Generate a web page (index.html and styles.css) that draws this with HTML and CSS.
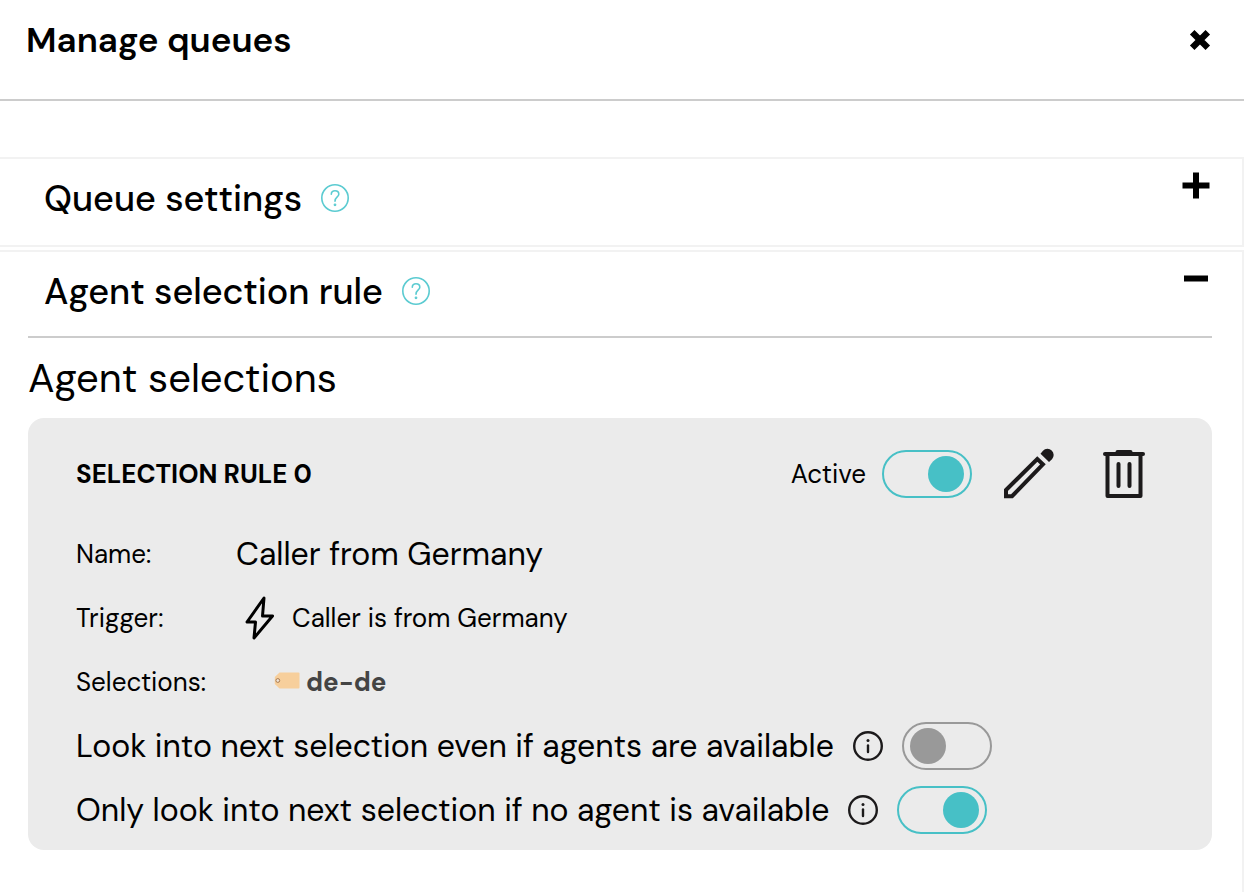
FILE: index.html
```html
<!DOCTYPE html>
<html lang="en">
<head>
<meta charset="UTF-8">
<meta name="viewport" content="width=device-width, initial-scale=1">
<title>Manage queues</title>
<link rel="stylesheet" href="styles.css">
</head>
<body>

    <header class="header">
        <h1>Manage queues</h1>
        <button type="button" class="icon-btn close" aria-label="Close">
            <svg width="24" height="24" viewBox="0 0 24 24"><path d="M4.2 4.2L19.8 19.8M19.8 4.2L4.2 19.8" stroke="#000" stroke-width="6.4"/></svg>
        </button>
    </header>

    <main class="panels">

        <section class="panel">
            <div class="panel-title">
                <h2>Queue settings</h2>
                <button type="button" class="icon-btn help" aria-label="Help">
                    <svg width="28" height="28" viewBox="0 0 28 28" fill="none" stroke="#5bcbd1" stroke-width="1.6" stroke-linecap="round"><circle cx="14" cy="14" r="13.2"/><path d="M10.3 10.2C10.3 7.9 11.8 6.8 14 6.8S17.8 8 17.8 10.2C17.8 13 14 12.8 14 17.2"/><circle cx="14" cy="20.8" r=".6" fill="#5bcbd1"/></svg>
                </button>
                <button type="button" class="icon-btn fold" aria-label="Expand">
                    <svg width="28" height="28" viewBox="0 0 28 28"><path d="M.5 14.5H27.5M14 1.5V27.5" stroke="#000" stroke-width="6"/></svg>
                </button>
            </div>
        </section>

        <section class="panel open">
            <div class="panel-title">
                <h2>Agent selection rule</h2>
                <button type="button" class="icon-btn help" aria-label="Help">
                    <svg width="28" height="28" viewBox="0 0 28 28" fill="none" stroke="#5bcbd1" stroke-width="1.6" stroke-linecap="round"><circle cx="14" cy="14" r="13.2"/><path d="M10.3 10.2C10.3 7.9 11.8 6.8 14 6.8S17.8 8 17.8 10.2C17.8 13 14 12.8 14 17.2"/><circle cx="14" cy="20.8" r=".6" fill="#5bcbd1"/></svg>
                </button>
                <button type="button" class="icon-btn fold" aria-label="Collapse">
                    <svg width="28" height="28" viewBox="0 0 28 28"><path d="M2 14.5H26" stroke="#000" stroke-width="6"/></svg>
                </button>
            </div>

            <div class="panel-body">
                <h3>Agent selections</h3>

                <div class="card">
                    <div class="card-head">
                        <h4>SELECTION RULE 0</h4>
                        <label for="active">Active</label>
                        <input type="checkbox" class="toggle" id="active" checked>
                        <button type="button" class="icon-btn edit" aria-label="Edit">
                            <svg width="52" height="52" viewBox="0 0 52 52"><path d="M4 42L35.3 11.1L40.9 16.3L10 48.2H4Z" fill="none" stroke="#1c1a1b" stroke-width="4"/><path d="M38.5 5.8L41 2.8A6 6 0 0 1 50 11.2L47 14Z" fill="#1c1a1b"/></svg>
                        </button>
                        <button type="button" class="icon-btn trash" aria-label="Delete">
                            <svg width="42" height="48" viewBox="0 0 42 48" fill="none" stroke="#1c1a1b" stroke-width="4" stroke-linecap="round" stroke-linejoin="round"><path d="M2 4H40"/><path d="M14.5 2H27.5"/><path d="M4.5 5V46H37.5V5"/><path d="M15.5 14V36M26.5 14V36"/></svg>
                        </button>
                    </div>

                    <dl class="details">
                        <dt>Name:</dt>
                        <dd class="name">Caller from Germany</dd>
                        <dt>Trigger:</dt>
                        <dd class="trigger">
                            <svg width="30" height="44" viewBox="0 0 30 44" fill="none" stroke="#000" stroke-width="3" stroke-linejoin="round"><path d="M19 2L2 26H10.5L9 42L27.5 20H17.5Z"/></svg>
                            Caller is from Germany
                        </dd>
                        <dt>Selections:</dt>
                        <dd class="tag">
                            <svg width="26" height="20" viewBox="0 0 26 20"><path d="M5.5 .5H24.5Q25.5 .5 25.5 1.5V15.5Q25.5 16.5 24.5 16.5H5.5L.8 12V5Z" fill="#f7cf9c"/><circle cx="3.8" cy="8.5" r="1.9" fill="#f0e4d6" stroke="#a9794e"/></svg>
                            de-de
                        </dd>
                    </dl>

                    <div class="option">
                        <label for="look-next">Look into next selection even if agents are available</label>
                        <svg width="30" height="30" viewBox="0 0 30 30" fill="none" stroke="#1c1a1b" stroke-linecap="round"><circle cx="15" cy="15" r="13.8" stroke-width="2.4"/><path d="M15 14.5V21" stroke-width="2.4"/><circle cx="15" cy="9.4" r="1.5" fill="#1c1a1b" stroke="none"/></svg>
                        <input type="checkbox" class="toggle" id="look-next">
                    </div>
                    <div class="option">
                        <label for="only-look">Only look into next selection if no agent is available</label>
                        <svg width="30" height="30" viewBox="0 0 30 30" fill="none" stroke="#1c1a1b" stroke-linecap="round"><circle cx="15" cy="15" r="13.8" stroke-width="2.4"/><path d="M15 14.5V21" stroke-width="2.4"/><circle cx="15" cy="9.4" r="1.5" fill="#1c1a1b" stroke="none"/></svg>
                        <input type="checkbox" class="toggle" id="only-look" checked>
                    </div>
                </div>
            </div>
        </section>

    </main>

</body>
</html>
```
FILE: styles.css
```css
* {
    box-sizing: border-box;
}

body {
    display: flex;
    flex-direction: column;
    min-height: 100vh;
    margin: 0;
    background-color: #fff;
    color: #000;
    font-family: "DM Sans", Inter, sans-serif;
    font-size: 26px;
}

h1, h2, h3, h4, dl, dd {
    margin: 0;
}

svg {
    display: block;
    flex: none;
}

.icon-btn {
    flex: none;
    padding: 0;
    border: none;
    background: none;
    cursor: pointer;
}

.header {
    display: flex;
    justify-content: space-between;
    padding: 20px 32px 39px 26px;
    border-bottom: 2px solid #ccc;
}

.header h1 {
    font-size: 35px;
    font-weight: 600;
    line-height: 40px;
}

/* accordion */
.panels {
    display: flex;
    flex: 1;
    flex-direction: column;
    gap: 3px;
    padding-top: 56px;
}

.panel {
    border: solid #f2f2f2;
    border-width: 2px 2px 2px 0;
}

.panel.open {
    flex: 1;
    border-bottom: none;
}

.panel-title {
    display: flex;
    align-items: center;
    height: 86px;
    padding: 0 32px 6px 44px;
}

.panel-title h2 {
    font-size: 36px;
    font-weight: 500;
    line-height: 44px;
}

.help {
    margin: 0 0 2px 19px;
}

.fold {
    align-self: flex-start;
    margin: 12px 0 0 auto;
}

.panel-body {
    margin: 0 30px 0 28px;
    padding-bottom: 42px;
}

.open .panel-title {
    height: 84px;
    padding-bottom: 4px;
}

.panel-body h3 {
    padding: 16px 0;
    border-top: 2px solid #ccc;
    font-size: 40px;
    font-weight: 400;
    line-height: 48px;
}

/* rule card */
.card {
    padding: 24px 67px 8px 48px;
    border-radius: 16px;
    background-color: #ebebeb;
}

.card-head {
    display: flex;
    align-items: center;
    height: 64px;
    margin-bottom: 16px;
}

.card-head h4 {
    margin-right: auto;
    font-size: 26px;
    font-weight: 700;
}

.card-head .toggle {
    margin: 0 30px 0 16px;
}

.trash {
    margin-left: 49px;
}

.details {
    display: grid;
    grid-template-columns: 160px 1fr;
    line-height: 64px;
}

.details dd {
    display: flex;
    align-items: center;
}

.details .name {
    font-size: 32px;
}

.details .trigger {
    gap: 17px;
    padding-left: 9px;
}

.details .tag {
    gap: 6px;
    padding-left: 38px;
    color: #444;
    font-weight: 700;
}

.option {
    display: flex;
    align-items: center;
    gap: 19px;
    height: 64px;
    font-size: 32px;
}

/* on/off switch */
.toggle {
    appearance: none;
    flex: none;
    width: 90px;
    height: 48px;
    margin: 0;
    padding: 4px 6px;
    border: 2px solid #999;
    border-radius: 24px;
    cursor: pointer;
}

.toggle::before {
    content: "";
    display: block;
    width: 36px;
    height: 36px;
    border-radius: 50%;
    background-color: #999;
}

.toggle:checked {
    border-color: #47c0c6;
}

.toggle:checked::before {
    margin-left: auto;
    background-color: #47c0c6;
}
```
